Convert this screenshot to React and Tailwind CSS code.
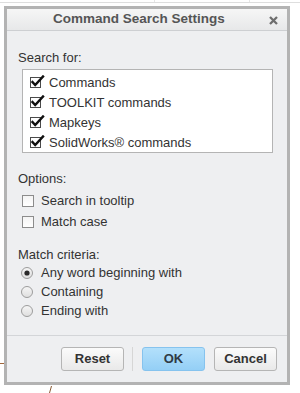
import React from 'react';

const CheckedBox = () => (
  <svg width="16" height="14" viewBox="0 0 16 14" className="shrink-0">
    <rect x="0.5" y="2.5" width="10" height="10" fill="#fff" stroke="#4a4a4a" />
    <path d="M2.5 7 L5.2 10 L13 1.5" fill="none" stroke="#111" strokeWidth="2.4" strokeLinecap="square" />
  </svg>
);

const EmptyBox = () => (
  <span className="w-[12px] h-[12px] shrink-0 border border-[#8c8c8c] bg-gradient-to-b from-[#f4f4f4] to-white" />
);

const Radio = ({ checked }) => (
  <svg width="12" height="12" viewBox="0 0 12 12" className="shrink-0">
    <defs>
      <linearGradient id="rg" x1="0" y1="0" x2="0" y2="1">
        <stop offset="0" stopColor="#f6f6f6" />
        <stop offset="1" stopColor="#dedede" />
      </linearGradient>
    </defs>
    <circle cx="6" cy="6" r="5.5" fill="url(#rg)" stroke="#9c9c9c" />
    {checked && <circle cx="6" cy="6" r="2.6" fill="#2a2a2a" />}
  </svg>
);

const Button = ({ children, primary }) => (
  <button
    className={
      primary
        ? 'w-[63px] h-[24px] rounded-[3px] border border-[#86c3ee] bg-gradient-to-b from-[#b3e0fb] to-[#94cff6] text-[13px] font-bold text-[#2f3b45]'
        : 'w-[63px] h-[24px] rounded-[3px] border border-[#b5b5b5] bg-gradient-to-b from-[#fbfbfb] to-[#e9e9e9] text-[13px] font-bold text-[#333]'
    }
  >
    {children}
  </button>
);

export default function App() {
  const listItems = ['Commands', 'TOOLKIT commands', 'Mapkeys', 'SolidWorks® commands'];

  return (
    <div className="relative w-[300px] h-[393px] bg-white overflow-hidden font-['Liberation_Sans',Arial,sans-serif] text-[#333]">
      {/* table header behind the dialog */}
      <div className="flex h-[3px] border-b border-[#dedede]">
        <div className="w-[155px] border-r border-[#e6e6e6]" />
        <div className="w-[95px] border-r border-[#e6e6e6]" />
      </div>

      <div className="ml-[4px] mt-[3px] w-[286px] h-[379px] border-[3px] border-[#b3b3b3] bg-[#eeeff1] flex flex-col">
        {/* title bar */}
        <div className="relative h-[22px] shrink-0 border-b border-[#cdcfd2] bg-gradient-to-b from-[#f6f6f6] to-[#e7e8e9] flex items-center">
          <span className="pl-[46px] text-[13.5px] font-bold text-[#555]">Command Search Settings</span>
          <svg width="9" height="9" viewBox="0 0 9 9" className="absolute left-[262px] top-[7px]">
            <path d="M1 1 L8 8 M8 1 L1 8" stroke="#6e6e6e" strokeWidth="2.3" />
          </svg>
        </div>

        {/* body */}
        <div className="flex-1 flex flex-col text-[13px] leading-[15px]">
          <div className="mt-[19px] pl-[11px]">Search for:</div>
          <div className="mt-[4px] ml-[15px] w-[251px] h-[84px] border border-[#b4b4b4] bg-white pt-[2px]">
            {listItems.map((t) => (
              <div key={t} className="h-[20px] flex items-center pl-[7px] gap-[3px]">
                <CheckedBox />
                <span>{t}</span>
              </div>
            ))}
          </div>

          <div className="mt-[18px] pl-[11px]">Options:</div>
          <div className="mt-[4px] pl-[15px]">
            {['Search in tooltip', 'Match case'].map((t) => (
              <div key={t} className="h-[21px] flex items-center gap-[7px]">
                <EmptyBox />
                <span>{t}</span>
              </div>
            ))}
          </div>

          <div className="mt-[15px] pl-[11px]">Match criteria:</div>
          <div className="mt-[1px] pl-[14px]">
            {['Any word beginning with', 'Containing', 'Ending with'].map((t, i) => (
              <div key={t} className="h-[19px] flex items-center gap-[8px]">
                <Radio checked={i === 0} />
                <span>{t}</span>
              </div>
            ))}
          </div>
        </div>

        {/* footer */}
        <div className="h-[47px] shrink-0 border-t border-[#d3d5d8] flex items-start justify-end pt-[11px] pr-[10px]">
          <Button>Reset</Button>
          <div className="w-px h-[24px] bg-[#d6d6d6] ml-[8px] mr-[9px]" />
          <Button primary>OK</Button>
          <div className="w-[9px]" />
          <Button>Cancel</Button>
        </div>
      </div>

      {/* stray lines from the page behind */}
      <svg width="300" height="393" className="absolute left-0 top-0 pointer-events-none">
        <path d="M0 363.5 H4" stroke="#a0663a" strokeWidth="1" />
        <path d="M51.5 386 L49.5 393" stroke="#8a5a34" strokeWidth="1" />
      </svg>
    </div>
  );
}
